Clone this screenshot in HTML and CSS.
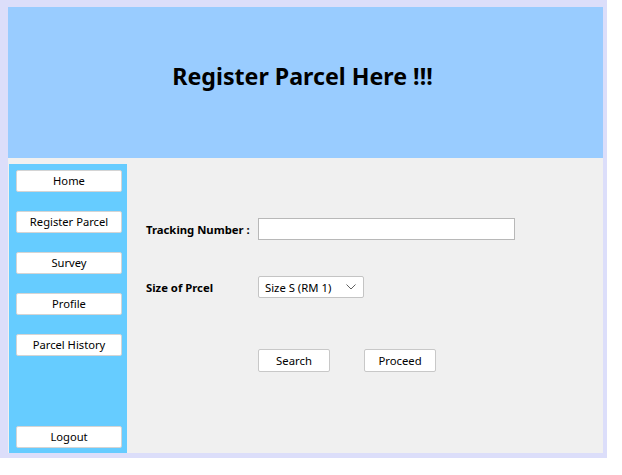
FILE: index.html
```html
<!DOCTYPE html>
<html>
<head>
<meta charset="utf-8">
<link rel="stylesheet" href="styles.css">
</head>
<body>
<div class="frame">
  <header class="banner">
    <h1 class="title">Register Parcel Here !!!</h1>
  </header>
  <div class="main">
    <nav class="sidebar">
      <button class="nav-btn">Home</button>
      <button class="nav-btn">Register Parcel</button>
      <button class="nav-btn">Survey</button>
      <button class="nav-btn">Profile</button>
      <button class="nav-btn">Parcel History</button>
      <button class="nav-btn logout">Logout</button>
    </nav>
    <section class="form">
      <div class="row row-tracking">
        <label class="label">Tracking Number :</label>
        <input class="text-input" type="text">
      </div>
      <div class="row row-size">
        <label class="label">Size of Prcel</label>
        <div class="combo">
          <span class="combo-text">Size S (RM 1)</span>
          <svg class="chevron" width="10" height="6" viewBox="0 0 10 6"><path d="M0.5 0.5 L5 5 L9.5 0.5" fill="none" stroke="#606060" stroke-width="1"/></svg>
        </div>
      </div>
      <div class="row row-actions">
        <span class="label"></span>
        <div class="actions">
          <button class="act-btn">Search</button>
          <button class="act-btn">Proceed</button>
        </div>
      </div>
    </section>
  </div>
</div>
</body>
</html>
```
FILE: styles.css
```css
* { box-sizing: border-box; }
html, body { margin: 0; padding: 0; background: #ffffff; }
body { font-family: "Noto Sans", "Open Sans", sans-serif; color: #000; }

.frame {
  width: 607px;
  height: 458px;
  padding: 7px 4px 5px 8px;
  background: #dcdefa;
  display: flex;
  flex-direction: column;
}

.banner {
  height: 151px;
  background: #99ccff;
  display: flex;
  align-items: center;
  justify-content: center;
  padding: 0 6px 11px 0;
}
.title {
  margin: 0;
  font-size: 23.2px;
  font-weight: 700;
  line-height: 1;
}

.main {
  flex: 1;
  background: #f0f0f0;
  display: flex;
  padding: 6px 0 0 1px;
}

.sidebar {
  width: 118px;
  background: #66ccff;
  display: flex;
  flex-direction: column;
  gap: 19px;
  padding: 6px 5px 5px 7px;
}
.nav-btn {
  width: 106px;
  height: 22px;
  background: #ffffff;
  border: 1px solid #d4d4d4;
  border-radius: 2px;
  font-family: inherit;
  font-size: 11.2px;
  color: #000;
  padding: 0;
  line-height: 20px;
}
.logout { margin-top: auto; }

.form {
  flex: 1;
  padding: 54px 0 0 19px;
  display: flex;
  flex-direction: column;
}
.row {
  display: flex;
  align-items: center;
}
.label {
  width: 112px;
  font-size: 11.3px;
  font-weight: 700;
}
.row-size { margin-top: 36px; }
.row-actions { margin-top: 51px; }

.text-input {
  width: 257px;
  height: 22px;
  border: 1px solid #b8b8b8;
  background: #fff;
  margin: 0;
  padding: 0 4px;
}

.combo {
  width: 106px;
  height: 22px;
  border: 1px solid #c4c4c4;
  border-radius: 2px;
  background: #fff;
  display: flex;
  align-items: center;
  justify-content: space-between;
  padding: 0 7px 0 6px;
  font-size: 11.3px;
}
.chevron { display: block; }

.actions {
  display: flex;
  gap: 34px;
}
.act-btn {
  width: 72px;
  height: 23px;
  background: #fff;
  border: 1px solid #c8c8c8;
  border-radius: 2px;
  font-family: inherit;
  font-size: 11.3px;
  color: #000;
  padding: 0;
}
```
